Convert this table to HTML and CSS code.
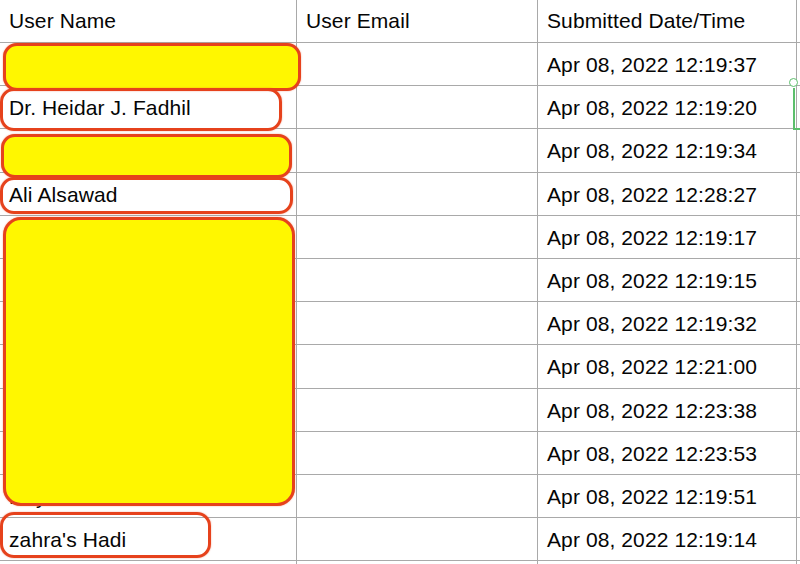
FILE: index.html
```html
<!DOCTYPE html>
<html>
<head>
<meta charset="utf-8">
<link rel="stylesheet" href="styles.css">
</head>
<body>
<div class="sheet">
  <div class="grid">
    <div class="cell head">User Name</div>
    <div class="cell head">User Email</div>
    <div class="cell head">Submitted Date/Time</div>
    <div class="cell head edge"></div>

    <div class="cell">Anonymous</div><div class="cell"></div><div class="cell">Apr 08, 2022 12:19:37</div><div class="cell edge"></div>
    <div class="cell">Dr. Heidar J. Fadhil</div><div class="cell"></div><div class="cell">Apr 08, 2022 12:19:20</div><div class="cell edge"></div>
    <div class="cell">Anonymous</div><div class="cell"></div><div class="cell">Apr 08, 2022 12:19:34</div><div class="cell edge"></div>
    <div class="cell">Ali Alsawad</div><div class="cell"></div><div class="cell">Apr 08, 2022 12:28:27</div><div class="cell edge"></div>
    <div class="cell">Anonymous</div><div class="cell"></div><div class="cell">Apr 08, 2022 12:19:17</div><div class="cell edge"></div>
    <div class="cell">Anonymous</div><div class="cell"></div><div class="cell">Apr 08, 2022 12:19:15</div><div class="cell edge"></div>
    <div class="cell">Anonymous</div><div class="cell"></div><div class="cell">Apr 08, 2022 12:19:32</div><div class="cell edge"></div>
    <div class="cell">Anonymous</div><div class="cell"></div><div class="cell">Apr 08, 2022 12:21:00</div><div class="cell edge"></div>
    <div class="cell">Anonymous</div><div class="cell"></div><div class="cell">Apr 08, 2022 12:23:38</div><div class="cell edge"></div>
    <div class="cell">Anonymous</div><div class="cell"></div><div class="cell">Apr 08, 2022 12:23:53</div><div class="cell edge"></div>
    <div class="cell">Ray</div><div class="cell"></div><div class="cell">Apr 08, 2022 12:19:51</div><div class="cell edge"></div>
    <div class="cell">zahra's Hadi</div><div class="cell"></div><div class="cell">Apr 08, 2022 12:19:14</div><div class="cell edge"></div>
    <div class="cell"></div><div class="cell"></div><div class="cell"></div><div class="cell edge"></div>
  </div>

  <div class="mark fill m1"></div>
  <div class="mark m2"></div>
  <div class="mark fill m3"></div>
  <div class="mark m4"></div>
  <div class="mark fill m5"></div>
  <div class="mark m6"></div>

  <div class="handle"><span class="dot"></span><span class="bar"></span><span class="foot"></span></div>
</div>
</body>
</html>
```

FILE: styles.css
```css
html, body {
  margin: 0;
  padding: 0;
  background: #ffffff;
}

.sheet {
  position: relative;
  width: 800px;
  height: 564px;
  overflow: hidden;
  font-family: "Liberation Sans", Arial, sans-serif;
  font-size: 21px;
  color: #050505;
}

.grid {
  display: grid;
  grid-template-columns: 297px 241px 259px 10px;
  grid-template-rows: 43px repeat(13, 43.2px);
}

.cell {
  display: flex;
  align-items: center;
  padding: 2px 0 0 9px;
  border-right: 1px solid #a9a9a9;
  border-bottom: 1px solid #a9a9a9;
  white-space: nowrap;
  overflow: hidden;
  letter-spacing: 0.1px;
}

.cell.head {
  padding-top: 0;
}

.cell.edge {
  border-right: none;
  padding: 0;
}

.mark {
  position: absolute;
  box-sizing: border-box;
  border: 3.5px solid #e6421c;
  border-radius: 14px;
  box-shadow: 0 0 1.5px 0 rgba(229, 64, 29, 0.6);
}

.mark.fill {
  background: #fff700;
}

.m1 { left: 3px; top: 43px; width: 298px; height: 48px; }
.m2 { left: 0; top: 88px; width: 282px; height: 43px; }
.m3 { left: 1px; top: 134px; width: 291px; height: 44px; }
.m4 { left: 0; top: 177px; width: 293px; height: 37px; }
.m5 { left: 3px; top: 217px; width: 292px; height: 289px; border-radius: 18px; }
.m6 { left: 0; top: 512px; width: 211px; height: 46px; }

.handle {
  position: absolute;
  left: 789px;
  top: 78px;
  width: 11px;
  height: 54px;
}

.handle .dot {
  position: absolute;
  left: 0;
  top: 0;
  width: 7px;
  height: 7px;
  border: 1.5px solid #5dbf6c;
  border-radius: 50%;
  background: #ffffff;
}

.handle .bar {
  position: absolute;
  left: 4px;
  top: 10px;
  width: 2px;
  height: 42px;
  background: #5dbf6c;
}

.handle .foot {
  position: absolute;
  left: 4px;
  top: 50px;
  width: 8px;
  height: 2px;
  background: #5dbf6c;
}
```
